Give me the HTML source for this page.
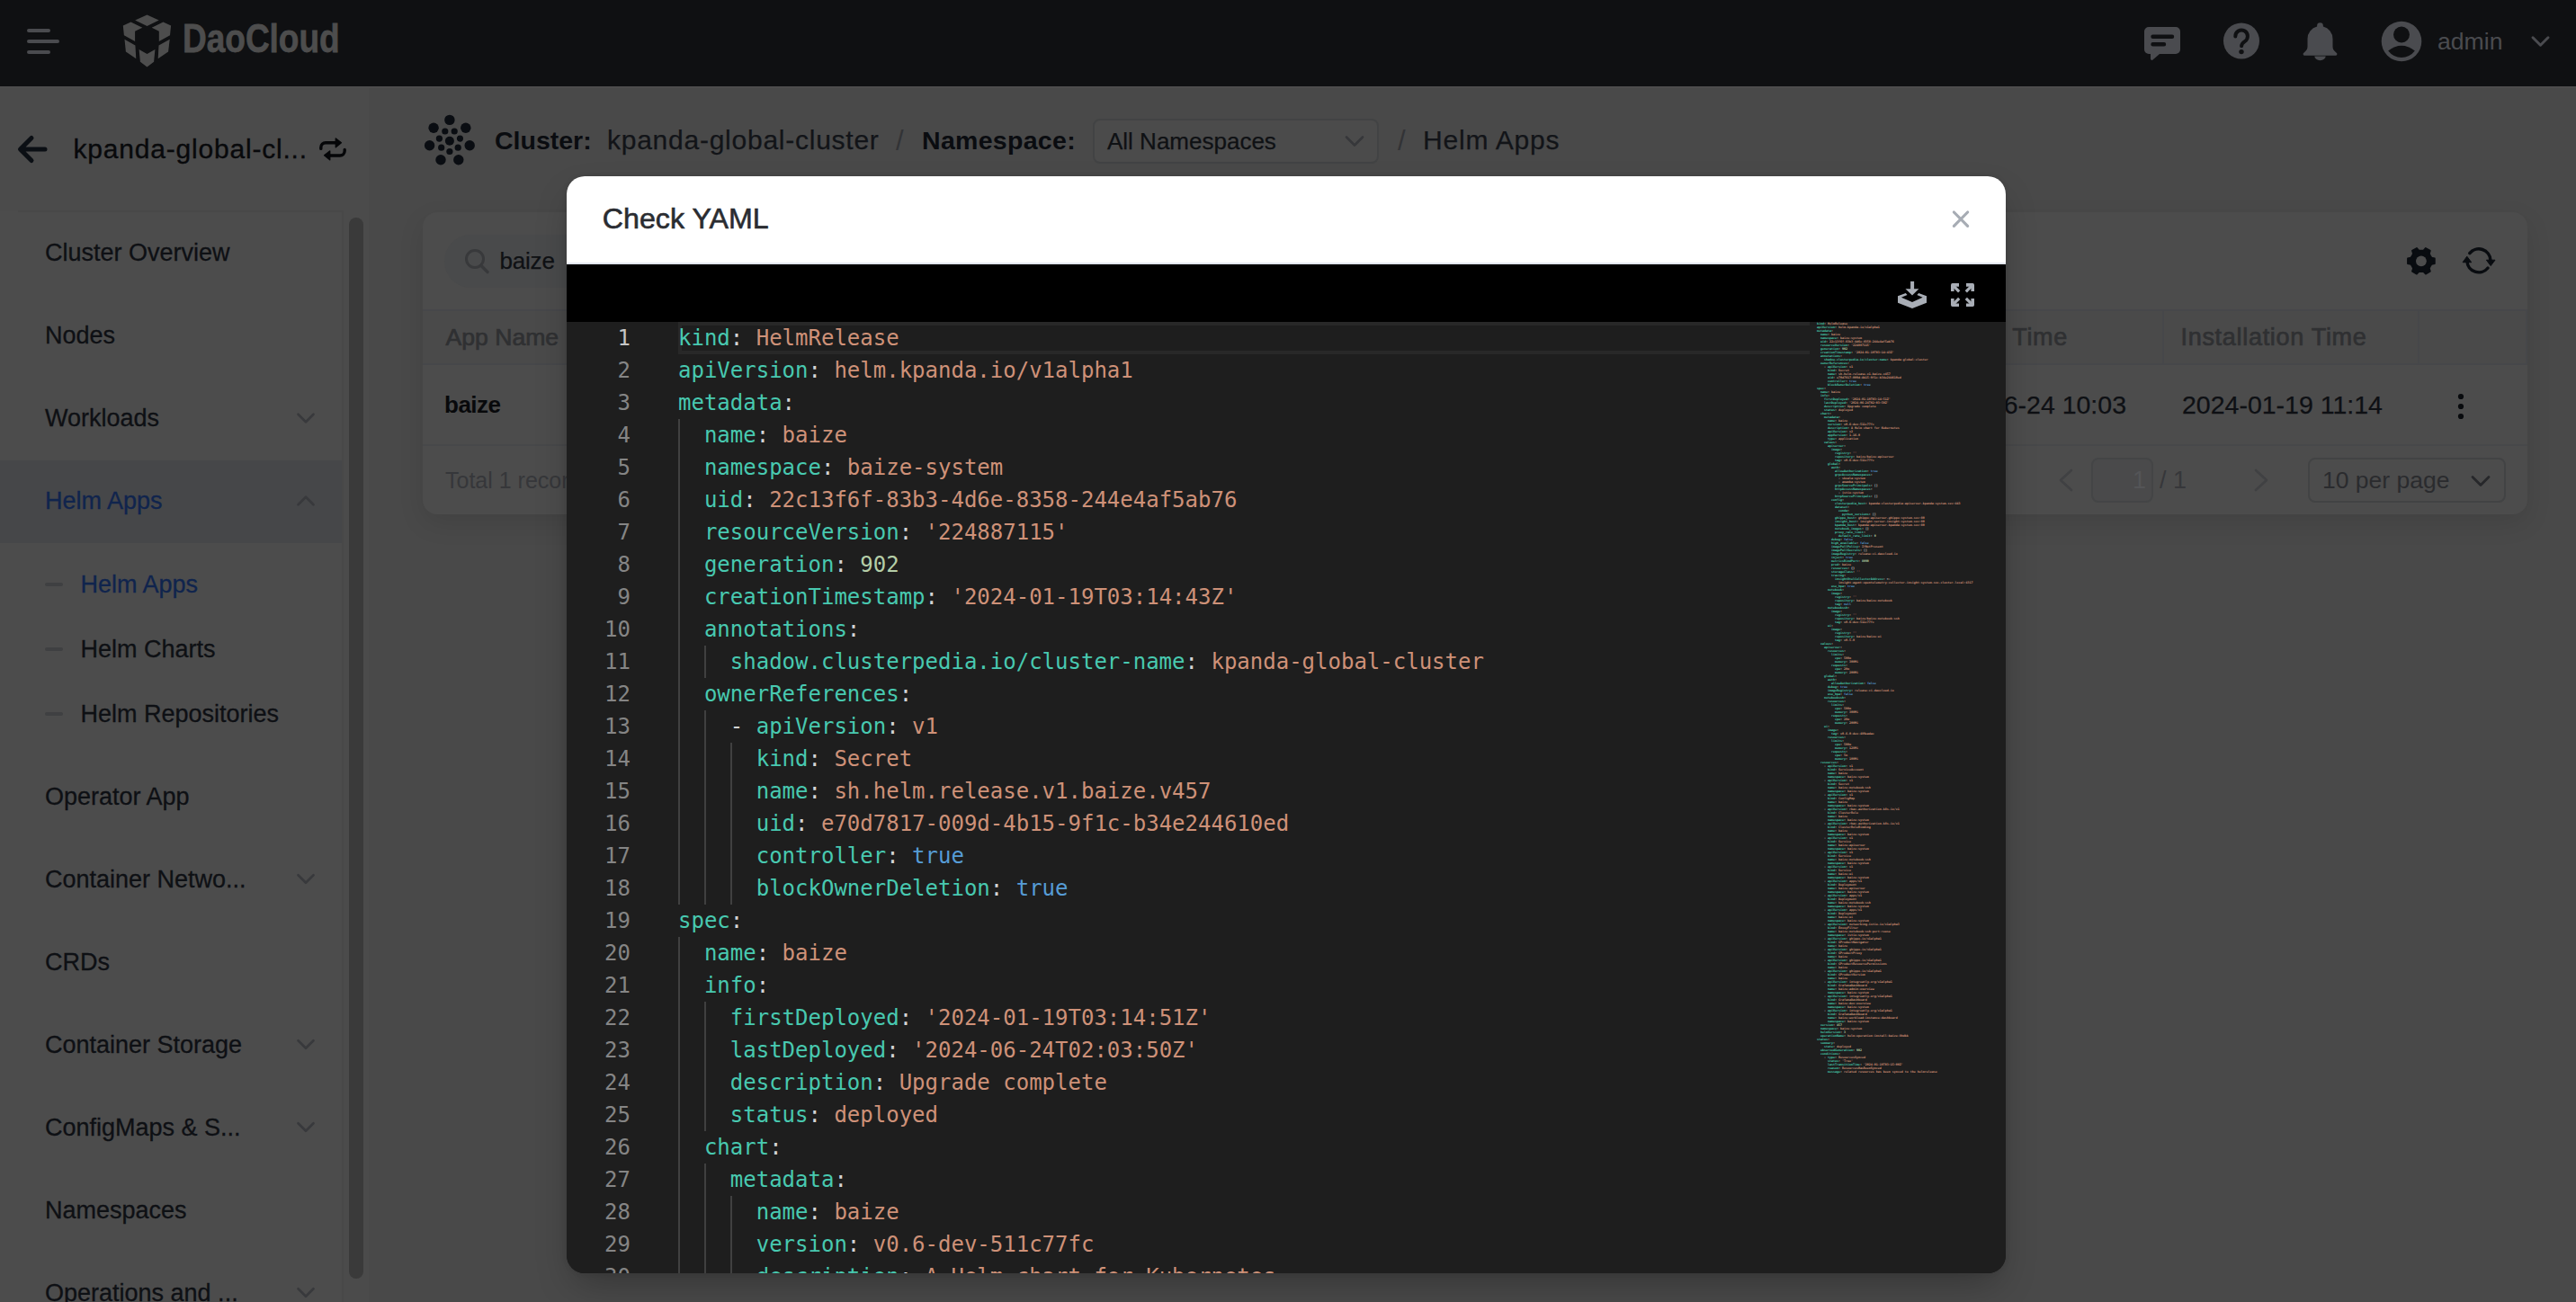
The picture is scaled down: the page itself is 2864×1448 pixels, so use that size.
<!DOCTYPE html>
<html lang="en">
<head>
<meta charset="utf-8">
<title>Helm Apps - Check YAML</title>
<style>
*{box-sizing:border-box;margin:0;padding:0}
html,body{width:2864px;height:1448px;overflow:hidden}
body{position:relative;background:#494949;font-family:"Liberation Sans",sans-serif;color:#0e1014}
.a{position:absolute}
.t{position:absolute;white-space:nowrap;line-height:1;transform:translateY(-50%)}
.b{font-weight:700}
svg{display:block;overflow:visible;position:absolute;left:0;top:0}
.hdr{left:0;top:0;width:2864px;height:96px;background:#0f1012}
.side{left:0;top:98px;width:410px;height:1350px;background:#4b4b4b}
.menu{left:0;top:235px;width:382px;height:1213px;background:#4c4c4c;border-right:2px solid #484848}
.card{left:470px;top:236px;width:2340px;height:336px;background:#4c4c4c;border-radius:16px;box-shadow:0 10px 28px rgba(0,0,0,.10)}
.bar{background:#4a4b4f;height:4px;border-radius:2px;left:30px}
.ln2{background:#474747}
.modal{left:630px;top:196px;width:1600px;height:1220px;border-radius:20px;background:#1e1e1e;overflow:hidden;box-shadow:none}
.mshadow{left:630px;top:196px;width:1600px;height:1220px;border-radius:20px;box-shadow:0 18px 40px -8px rgba(0,0,0,.28),0 0 6px rgba(0,0,0,.09)}
.mh{left:0;top:0;width:1600px;height:98px;background:#fff;border-bottom:2px solid #e3e6ee}
.tb{left:0;top:98px;width:1600px;height:64px;background:#000}
.ed{left:0;top:162px;width:1600px;height:1058px;background:#1e1e1e;overflow:hidden;font-family:"DejaVu Sans Mono","Liberation Mono",monospace;font-size:24px;line-height:36px;color:#d4d4d4}
.ln{position:absolute;left:0;width:71px;height:36px;text-align:right;color:#858585;white-space:pre}
.ln.act{color:#c6c6c6}
.code{position:absolute;left:124px;top:0;width:1260px;height:1100px}
.cl{position:absolute;left:0;height:36px;white-space:pre}
.g{position:absolute;display:block;width:2px;height:36px;background:#404040}
.cur{position:absolute;left:124px;top:0;width:1258px;height:36px;border:4px solid #282828;border-right:0}
.ty{color:#48c9b0}.st{color:#ce9178}.nu{color:#b5cea8}.kw{color:#569cd6}.op{color:#d4d4d4}
.mini{position:absolute;left:1390px;top:0;width:200px;font-size:3.32px;line-height:4px;opacity:1;font-weight:700}
.mini div{height:4px;white-space:pre;overflow:visible}

</style>
</head>
<body>
<header>
<div class="a hdr"></div>
<div class="a " style="left:0px;top:96px;width:2864px;height:2px;background:#4d4d4d"></div>
<div class="a bar" style="left:30px;top:32px;width:26px;height:4px;"></div>
<div class="a bar" style="left:30px;top:44px;width:36px;height:4px;"></div>
<div class="a bar" style="left:30px;top:56px;width:26px;height:4px;"></div>
<div class="t b" style="left:202.6px;top:42.2px;font-size:45px;color:#4d4d4d;transform-origin:0 50%;transform:translateY(-50%) scaleX(.822);-webkit-text-stroke:.8px #4d4d4d">DaoCloud</div>
<div class="t " style="left:2710px;top:46px;font-size:26.6px;color:#4a4b4f;">admin</div>
</header>
<aside><nav>
<div class="a side"></div>
<div class="a menu"></div>
<div class="a " style="left:20px;top:234px;width:362px;height:2px;background:#484848"></div>
<div class="a " style="left:0px;top:512px;width:380px;height:92px;background:#464749"></div>
<div class="a " style="left:388px;top:242px;width:16px;height:1180px;background:#3a3a3a;border-radius:8px"></div>
<div class="t " style="left:81.5px;top:166px;font-size:30px;color:#08090b;letter-spacing:.8px;-webkit-text-stroke:.35px #08090b">kpanda-global-cl...</div>
<div class="t " style="left:50px;top:281px;font-size:27px;color:#0e1014;-webkit-text-stroke:.3px #0e1014">Cluster Overview</div>
<div class="t " style="left:50px;top:373px;font-size:27px;color:#0e1014;-webkit-text-stroke:.3px #0e1014">Nodes</div>
<div class="t " style="left:50px;top:465px;font-size:27px;color:#0e1014;-webkit-text-stroke:.3px #0e1014">Workloads</div>
<div class="t " style="left:50px;top:557px;font-size:27px;color:#10244d;-webkit-text-stroke:.3px #10244d">Helm Apps</div>
<div class="t " style="left:50px;top:885.5px;font-size:27px;color:#0e1014;-webkit-text-stroke:.3px #0e1014">Operator App</div>
<div class="t " style="left:50px;top:977.5px;font-size:27px;color:#0e1014;-webkit-text-stroke:.3px #0e1014">Container Netwo...</div>
<div class="t " style="left:50px;top:1069.5px;font-size:27px;color:#0e1014;-webkit-text-stroke:.3px #0e1014">CRDs</div>
<div class="t " style="left:50px;top:1161.5px;font-size:27px;color:#0e1014;-webkit-text-stroke:.3px #0e1014">Container Storage</div>
<div class="t " style="left:50px;top:1253.5px;font-size:27px;color:#0e1014;-webkit-text-stroke:.3px #0e1014">ConfigMaps &amp; S...</div>
<div class="t " style="left:50px;top:1345.5px;font-size:27px;color:#0e1014;-webkit-text-stroke:.3px #0e1014">Namespaces</div>
<div class="t " style="left:50px;top:1437.5px;font-size:27px;color:#0e1014;-webkit-text-stroke:.3px #0e1014">Operations and ...</div>
<div class="a " style="left:50px;top:648px;width:20px;height:4px;background:#3f4042;border-radius:2px"></div>
<div class="t " style="left:89.5px;top:650px;font-size:27px;color:#10244d;-webkit-text-stroke:.3px #10244d">Helm Apps</div>
<div class="a " style="left:50px;top:720px;width:20px;height:4px;background:#3f4042;border-radius:2px"></div>
<div class="t " style="left:89.5px;top:722px;font-size:27px;color:#0e1014;-webkit-text-stroke:.3px #0e1014">Helm Charts</div>
<div class="a " style="left:50px;top:792px;width:20px;height:4px;background:#3f4042;border-radius:2px"></div>
<div class="t " style="left:89.5px;top:794px;font-size:27px;color:#0e1014;-webkit-text-stroke:.3px #0e1014">Helm Repositories</div>
</nav></aside>
<main>
<div class="t b" style="left:550px;top:156px;font-size:28.5px;color:#0a0c10;">Cluster:</div>
<div class="t " style="left:675px;top:156px;font-size:30px;color:#121418;letter-spacing:.75px;-webkit-text-stroke:.25px #121418">kpanda-global-cluster</div>
<div class="t " style="left:996px;top:156px;font-size:31px;color:#323336;">/</div>
<div class="t b" style="left:1025px;top:156px;font-size:28.5px;color:#0a0c10;letter-spacing:.3px">Namespace:</div>
<div class="a " style="left:1215px;top:132px;width:318px;height:50px;border:2px solid #424344;border-radius:8px;background:#4b4b4b"></div>
<div class="t " style="left:1231px;top:157px;font-size:26px;color:#0f1114;-webkit-text-stroke:.25px #0f1114">All Namespaces</div>
<div class="t " style="left:1554px;top:156px;font-size:31px;color:#323336;">/</div>
<div class="t " style="left:1582px;top:156px;font-size:30px;color:#121418;letter-spacing:.8px;-webkit-text-stroke:.25px #121418">Helm Apps</div>
<div class="a card"></div>
<div class="a " style="left:494px;top:261px;width:1200px;height:59px;background:#494a4b;border-radius:30px"></div>
<div class="t " style="left:555.5px;top:290px;font-size:26px;color:#0f1114;letter-spacing:-.2px;-webkit-text-stroke:.25px #0f1114">baize</div>
<div class="a " style="left:470px;top:344px;width:2340px;height:62px;background:#4a4a4a;border:2px solid #46474a;border-left:0"></div>
<div class="a " style="left:2404px;top:346px;width:2px;height:58px;background:#46474a"></div>
<div class="a " style="left:2688px;top:346px;width:2px;height:58px;background:#46474a"></div>
<div class="t " style="left:495.5px;top:375px;font-size:26.6px;color:#2f3032;-webkit-text-stroke:.7px #2f3032">App Name</div>
<div class="t " style="right:565px;top:375px;font-size:27px;color:#2f3032;letter-spacing:.7px;word-spacing:8px;-webkit-text-stroke:.7px #2f3032">Update Time</div>
<div class="t " style="left:2424.5px;top:375px;font-size:27px;color:#2f3032;letter-spacing:.7px;-webkit-text-stroke:.7px #2f3032">Installation Time</div>
<div class="a " style="left:470px;top:493.5px;width:2340px;height:2px;background:#47484a"></div>
<div class="t b" style="left:494px;top:450px;font-size:26px;color:#08090b;letter-spacing:-.5px">baize</div>
<div class="t " style="right:500px;top:449.5px;font-size:28.5px;color:#0e1014;-webkit-text-stroke:.25px #0e1014">2024-06-24 10:03</div>
<div class="t " style="left:2426px;top:449.5px;font-size:28.5px;color:#0e1014;-webkit-text-stroke:.25px #0e1014">2024-01-19 11:14</div>
<div class="t " style="left:495px;top:534px;font-size:25px;color:#36373a;">Total 1 records</div>
<div class="a " style="left:2325px;top:509px;width:69px;height:50px;border:2px solid #444546;border-radius:8px;background:#4a4a4b"></div>
<div class="t " style="right:478px;top:534px;font-size:27px;color:#545557;">1</div>
<div class="t " style="left:2401px;top:534px;font-size:27px;color:#36373a;">/ 1</div>
<div class="a " style="left:2566px;top:509px;width:220px;height:50px;border:2px solid #424344;border-radius:8px"></div>
<div class="t " style="left:2582px;top:534px;font-size:26.5px;color:#2a2b2e;">10 per page</div>
<svg width="2864" height="1448" viewBox="0 0 2864 1448"><polygon points="163.5,16.5 176.7,22.5 163.5,29 150.2,22.5" fill="#4d4d4d"/><polygon points="136.8,28.5 145.5,24.6 158.3,30.8 150.1,34.8 150.1,46 137.9,39.3" fill="#4d4d4d"/><polygon points="190.1,28.5 181.4,24.6 168.7,30.8 176.8,34.8 176.8,46 189,39.3" fill="#4d4d4d"/><polygon points="138.5,43.7 150.4,50.5 151.3,65.2 139.9,57.6" fill="#4d4d4d"/><polygon points="188.7,43.7 176.5,50.5 175.7,65.2 187.1,57.6" fill="#4d4d4d"/><polygon points="154.6,54.9 163.5,60 172.4,54.9 171.1,68.7 163.5,74.5 155.9,68.7" fill="#4d4d4d"/><path d="M2389 30 h30 a5 5 0 0 1 5 5 v20 a5 5 0 0 1 -5 5 h-18 l-7.5 6.5 a1.5 1.5 0 0 1 -2.5 -1.2 v-5.3 h-2 a5 5 0 0 1 -5 -5 v-20 a5 5 0 0 1 5 -5 z" fill="#4a4b4f"/><path d="M2393.5 40.8 h21.5 M2393.5 49.3 h12.5" stroke="#0f1012" stroke-width="4.4" stroke-linecap="round"/><circle cx="2492" cy="45.5" r="20" fill="#4a4b4f"/><path d="M2485.3 40.5 a6.8 6.8 0 1 1 10.4 5.6 c-2.6 1.7 -3.6 2.8 -3.6 5.2" fill="none" stroke="#0f1012" stroke-width="4" stroke-linecap="round"/><circle cx="2492" cy="57.6" r="2.7" fill="#0f1012"/><path d="M2579.5 25.300 a3.4 3.4 0 0 1 3.4 3.4 v.9 a14 14 0 0 1 10.6 13.6 v8.500 c0 2.500 1 4 2.800 5.800 l1.600 1.600 a1.500 1.500 0 0 1 -1.100 2.600 h-34.6 a1.500 1.500 0 0 1 -1.100 -2.600 l1.600 -1.600 c1.800 -1.800 2.800 -3.300 2.800 -5.800 v-8.500 a14 14 0 0 1 10.6 -13.6 v-.9 a3.4 3.4 0 0 1 3.4 -3.4 z" fill="#4a4b4f"/><path d="M2573.3 62.6 h12.4 a6.2 4.6 0 0 1 -12.4 0 z" fill="#4a4b4f"/><circle cx="2670" cy="46" r="22.3" fill="#4a4b4f"/><circle cx="2670" cy="38.5" r="9" fill="#0f1012"/><path d="M2655.2 56.5 Q2670 45 2684.800 56.5 A18.4 18.4 0 0 1 2655.2 56.5 Z" fill="#0f1012"/><polyline points="2816.0,41.75 2824.5,50.25 2833.0,41.75" fill="none" stroke="#4a4b4f" stroke-width="3" stroke-linecap="round" stroke-linejoin="round"/><path d="M50 166 H23 M35 153.5 L22.500 166 L35 178.500" fill="none" stroke="#0b0f14" stroke-width="5" stroke-linecap="round" stroke-linejoin="round"/><path d="M356.800 165.4 v-1.400 a5.2 5.2 0 0 1 5.2 -5.2 h11 M383.200 166.4 v1.400 a5.2 5.2 0 0 1 -5.2 5.2 h-11" fill="none" stroke="#050608" stroke-width="3.4" stroke-linecap="round"/><polygon points="373.300,154 379.400,158.800 373.300,163.700" fill="#050608" stroke="#050608" stroke-width="1.400" stroke-linejoin="round"/><polygon points="366.700,168 360.600,172.800 366.700,177.700" fill="#050608" stroke="#050608" stroke-width="1.400" stroke-linejoin="round"/><polyline points="331.5,460.75 340,469.25 348.5,460.75" fill="none" stroke="#38393c" stroke-width="2.6" stroke-linecap="round" stroke-linejoin="round"/><polyline points="331.5,561.25 340,552.75 348.5,561.25" fill="none" stroke="#38393c" stroke-width="2.6" stroke-linecap="round" stroke-linejoin="round"/><polyline points="331.5,973.25 340,981.75 348.5,973.25" fill="none" stroke="#38393c" stroke-width="2.6" stroke-linecap="round" stroke-linejoin="round"/><polyline points="331.5,1157.25 340,1165.75 348.5,1157.25" fill="none" stroke="#38393c" stroke-width="2.6" stroke-linecap="round" stroke-linejoin="round"/><polyline points="331.5,1249.25 340,1257.75 348.5,1249.25" fill="none" stroke="#38393c" stroke-width="2.6" stroke-linecap="round" stroke-linejoin="round"/><polyline points="331.5,1433.25 340,1441.75 348.5,1433.25" fill="none" stroke="#38393c" stroke-width="2.6" stroke-linecap="round" stroke-linejoin="round"/><circle cx="499.9" cy="133.4" r="5.7" fill="#0a0d12"/><circle cx="482.1" cy="142.3" r="5.7" fill="#0a0d12"/><circle cx="517.8" cy="142.3" r="5.7" fill="#0a0d12"/><circle cx="477.6" cy="161.8" r="5.7" fill="#0a0d12"/><circle cx="522.2" cy="161.8" r="5.7" fill="#0a0d12"/><circle cx="490" cy="177.8" r="5.7" fill="#0a0d12"/><circle cx="509.8" cy="177.8" r="5.7" fill="#0a0d12"/><circle cx="494.8" cy="146" r="3.6" fill="#0a0d12"/><circle cx="505.2" cy="146" r="3.6" fill="#0a0d12"/><circle cx="488.4" cy="154.1" r="3.6" fill="#0a0d12"/><circle cx="511.4" cy="154.1" r="3.6" fill="#0a0d12"/><circle cx="490.7" cy="164.2" r="3.6" fill="#0a0d12"/><circle cx="509.2" cy="164.2" r="3.6" fill="#0a0d12"/><circle cx="499.9" cy="168.5" r="3.6" fill="#0a0d12"/><circle cx="499.9" cy="156.7" r="5" fill="#0a0d12"/><polyline points="1497.0,152.5 1506,161.5 1515.0,152.5" fill="none" stroke="#36373a" stroke-width="2.6" stroke-linecap="round" stroke-linejoin="round"/><circle cx="528" cy="288" r="9.5" fill="none" stroke="#38393b" stroke-width="3"/><path d="M535 295.500 L542 302.500" stroke="#38393b" stroke-width="3.4" stroke-linecap="round"/><polygon points="2706.92,287.38 2706.92,293.22 2703.41,294.04 2702.03,296.15 2700.89,298.40 2701.94,301.85 2696.88,304.77 2694.42,302.14 2691.90,302.00 2689.38,302.14 2686.92,304.77 2681.86,301.85 2682.91,298.40 2681.77,296.15 2680.39,294.04 2676.88,293.22 2676.88,287.38 2680.39,286.56 2681.77,284.45 2682.91,282.20 2681.86,278.75 2686.92,275.83 2689.38,278.46 2691.90,278.60 2694.42,278.46 2696.88,275.83 2701.94,278.75 2700.89,282.20 2702.03,284.45 2703.41,286.56" fill="#090c10" stroke="#090c10" stroke-width="1.600" stroke-linejoin="round"/><circle cx="2691.9" cy="290.3" r="5.9" fill="#4c4c4c"/><path d="M2745.800 281.700 A13 13 0 0 1 2768.900 289.300" fill="none" stroke="#090c10" stroke-width="3.500" stroke-linecap="round"/><path d="M2766 298 A13 13 0 0 1 2742.900 290.300" fill="none" stroke="#090c10" stroke-width="3.500" stroke-linecap="round"/><polygon points="2764.400,289.200 2774,289.200 2769.200,295.600" fill="#090c10" stroke="#090c10" stroke-width="1" stroke-linejoin="round"/><polygon points="2738.100,291.700 2747.700,291.700 2742.800,285.200" fill="#090c10" stroke="#090c10" stroke-width="1" stroke-linejoin="round"/><circle cx="2736" cy="441" r="3.1" fill="#090b0e"/><circle cx="2736" cy="452" r="3.1" fill="#090b0e"/><circle cx="2736" cy="463" r="3.1" fill="#090b0e"/><polyline points="2303,523 2291,534 2303,545" fill="none" stroke="#404143" stroke-width="2.6" stroke-linecap="round" stroke-linejoin="round"/><polyline points="2508,523 2520,534 2508,545" fill="none" stroke="#404143" stroke-width="2.6" stroke-linecap="round" stroke-linejoin="round"/><polyline points="2749.0,530.5 2758,539.5 2767.0,530.5" fill="none" stroke="#26272a" stroke-width="2.8" stroke-linecap="round" stroke-linejoin="round"/></svg>
</main>
<div class="a mshadow"></div>
<div class="a modal" role="dialog" aria-modal="true" aria-label="Check YAML">
<div class="a mh"></div>
<div class="t" style="left:39.8px;top:47px;font-size:32.2px;color:#2a2c31;-webkit-text-stroke:.6px #2a2c31">Check YAML</div>
<div class="a tb"></div>
<svg width="1600" height="1220" viewBox="0 0 1600 1220"><path d="M1542.400 40 L1557.600 55.400 M1557.600 40 L1542.400 55.400" stroke="#a7acb4" stroke-width="3.2" stroke-linecap="round"/><rect x="1494.100" y="116.900" width="4" height="9" fill="#a9aeb6"/><polygon points="1488.500,125.200 1503.400,125.200 1496,132.600" fill="#a9aeb6"/><polygon points="1480,133.300 1488.800,129.900 1490.500,131.900 1483.900,134.700 1496,139.900 1507.600,134.700 1501.300,131.900 1503.200,129.900 1512,133.300 1512,140.800 1496,147.100 1480,140.800" fill="#a9aeb6"/><path d="M1548.0 120.9 H1540.8 V128.1" fill="none" stroke="#a9aeb6" stroke-width="3.6" stroke-linejoin="round"/><path d="M1540.8 120.9 L1548.2 128.3" stroke="#a9aeb6" stroke-width="3.2"/><path d="M1556.0 120.9 H1563.2 V128.1" fill="none" stroke="#a9aeb6" stroke-width="3.6" stroke-linejoin="round"/><path d="M1563.2 120.9 L1555.8 128.3" stroke="#a9aeb6" stroke-width="3.2"/><path d="M1548.0 143.2 H1540.8 V136.0" fill="none" stroke="#a9aeb6" stroke-width="3.6" stroke-linejoin="round"/><path d="M1540.8 143.2 L1548.2 135.79999999999998" stroke="#a9aeb6" stroke-width="3.2"/><path d="M1556.0 143.2 H1563.2 V136.0" fill="none" stroke="#a9aeb6" stroke-width="3.6" stroke-linejoin="round"/><path d="M1563.2 143.2 L1555.8 135.79999999999998" stroke="#a9aeb6" stroke-width="3.2"/></svg>
<div class="a ed">
<div class="cur"></div>
<div class="ln act" style="top:0px">1</div>
<div class="ln" style="top:36px">2</div>
<div class="ln" style="top:72px">3</div>
<div class="ln" style="top:108px">4</div>
<div class="ln" style="top:144px">5</div>
<div class="ln" style="top:180px">6</div>
<div class="ln" style="top:216px">7</div>
<div class="ln" style="top:252px">8</div>
<div class="ln" style="top:288px">9</div>
<div class="ln" style="top:324px">10</div>
<div class="ln" style="top:360px">11</div>
<div class="ln" style="top:396px">12</div>
<div class="ln" style="top:432px">13</div>
<div class="ln" style="top:468px">14</div>
<div class="ln" style="top:504px">15</div>
<div class="ln" style="top:540px">16</div>
<div class="ln" style="top:576px">17</div>
<div class="ln" style="top:612px">18</div>
<div class="ln" style="top:648px">19</div>
<div class="ln" style="top:684px">20</div>
<div class="ln" style="top:720px">21</div>
<div class="ln" style="top:756px">22</div>
<div class="ln" style="top:792px">23</div>
<div class="ln" style="top:828px">24</div>
<div class="ln" style="top:864px">25</div>
<div class="ln" style="top:900px">26</div>
<div class="ln" style="top:936px">27</div>
<div class="ln" style="top:972px">28</div>
<div class="ln" style="top:1008px">29</div>
<div class="ln" style="top:1044px">30</div>
<div class="code"><i class="g" style="left:0px;top:108px"></i><i class="g" style="left:0px;top:144px"></i><i class="g" style="left:0px;top:180px"></i><i class="g" style="left:0px;top:216px"></i><i class="g" style="left:0px;top:252px"></i><i class="g" style="left:0px;top:288px"></i><i class="g" style="left:0px;top:324px"></i><i class="g" style="left:0px;top:360px"></i><i class="g" style="left:29px;top:360px"></i><i class="g" style="left:0px;top:396px"></i><i class="g" style="left:0px;top:432px"></i><i class="g" style="left:29px;top:432px"></i><i class="g" style="left:0px;top:468px"></i><i class="g" style="left:29px;top:468px"></i><i class="g" style="left:58px;top:468px"></i><i class="g" style="left:0px;top:504px"></i><i class="g" style="left:29px;top:504px"></i><i class="g" style="left:58px;top:504px"></i><i class="g" style="left:0px;top:540px"></i><i class="g" style="left:29px;top:540px"></i><i class="g" style="left:58px;top:540px"></i><i class="g" style="left:0px;top:576px"></i><i class="g" style="left:29px;top:576px"></i><i class="g" style="left:58px;top:576px"></i><i class="g" style="left:0px;top:612px"></i><i class="g" style="left:29px;top:612px"></i><i class="g" style="left:58px;top:612px"></i><i class="g" style="left:0px;top:684px"></i><i class="g" style="left:0px;top:720px"></i><i class="g" style="left:0px;top:756px"></i><i class="g" style="left:29px;top:756px"></i><i class="g" style="left:0px;top:792px"></i><i class="g" style="left:29px;top:792px"></i><i class="g" style="left:0px;top:828px"></i><i class="g" style="left:29px;top:828px"></i><i class="g" style="left:0px;top:864px"></i><i class="g" style="left:29px;top:864px"></i><i class="g" style="left:0px;top:900px"></i><i class="g" style="left:0px;top:936px"></i><i class="g" style="left:29px;top:936px"></i><i class="g" style="left:0px;top:972px"></i><i class="g" style="left:29px;top:972px"></i><i class="g" style="left:58px;top:972px"></i><i class="g" style="left:0px;top:1008px"></i><i class="g" style="left:29px;top:1008px"></i><i class="g" style="left:58px;top:1008px"></i><i class="g" style="left:0px;top:1044px"></i><i class="g" style="left:29px;top:1044px"></i><i class="g" style="left:58px;top:1044px"></i>
<div class="cl" style="top:0px"><span class="ty">kind</span><span class="op">:</span> <span class="st">HelmRelease</span></div>
<div class="cl" style="top:36px"><span class="ty">apiVersion</span><span class="op">:</span> <span class="st">helm.kpanda.io/v1alpha1</span></div>
<div class="cl" style="top:72px"><span class="ty">metadata</span><span class="op">:</span></div>
<div class="cl" style="top:108px">  <span class="ty">name</span><span class="op">:</span> <span class="st">baize</span></div>
<div class="cl" style="top:144px">  <span class="ty">namespace</span><span class="op">:</span> <span class="st">baize-system</span></div>
<div class="cl" style="top:180px">  <span class="ty">uid</span><span class="op">:</span> <span class="st">22c13f6f-83b3-4d6e-8358-244e4af5ab76</span></div>
<div class="cl" style="top:216px">  <span class="ty">resourceVersion</span><span class="op">:</span> <span class="st">'224887115'</span></div>
<div class="cl" style="top:252px">  <span class="ty">generation</span><span class="op">:</span> <span class="nu">902</span></div>
<div class="cl" style="top:288px">  <span class="ty">creationTimestamp</span><span class="op">:</span> <span class="st">'2024-01-19T03:14:43Z'</span></div>
<div class="cl" style="top:324px">  <span class="ty">annotations</span><span class="op">:</span></div>
<div class="cl" style="top:360px">    <span class="ty">shadow.clusterpedia.io/cluster-name</span><span class="op">:</span> <span class="st">kpanda-global-cluster</span></div>
<div class="cl" style="top:396px">  <span class="ty">ownerReferences</span><span class="op">:</span></div>
<div class="cl" style="top:432px">    <span class="op">-</span> <span class="ty">apiVersion</span><span class="op">:</span> <span class="st">v1</span></div>
<div class="cl" style="top:468px">      <span class="ty">kind</span><span class="op">:</span> <span class="st">Secret</span></div>
<div class="cl" style="top:504px">      <span class="ty">name</span><span class="op">:</span> <span class="st">sh.helm.release.v1.baize.v457</span></div>
<div class="cl" style="top:540px">      <span class="ty">uid</span><span class="op">:</span> <span class="st">e70d7817-009d-4b15-9f1c-b34e244610ed</span></div>
<div class="cl" style="top:576px">      <span class="ty">controller</span><span class="op">:</span> <span class="kw">true</span></div>
<div class="cl" style="top:612px">      <span class="ty">blockOwnerDeletion</span><span class="op">:</span> <span class="kw">true</span></div>
<div class="cl" style="top:648px"><span class="ty">spec</span><span class="op">:</span></div>
<div class="cl" style="top:684px">  <span class="ty">name</span><span class="op">:</span> <span class="st">baize</span></div>
<div class="cl" style="top:720px">  <span class="ty">info</span><span class="op">:</span></div>
<div class="cl" style="top:756px">    <span class="ty">firstDeployed</span><span class="op">:</span> <span class="st">'2024-01-19T03:14:51Z'</span></div>
<div class="cl" style="top:792px">    <span class="ty">lastDeployed</span><span class="op">:</span> <span class="st">'2024-06-24T02:03:50Z'</span></div>
<div class="cl" style="top:828px">    <span class="ty">description</span><span class="op">:</span> <span class="st">Upgrade complete</span></div>
<div class="cl" style="top:864px">    <span class="ty">status</span><span class="op">:</span> <span class="st">deployed</span></div>
<div class="cl" style="top:900px">  <span class="ty">chart</span><span class="op">:</span></div>
<div class="cl" style="top:936px">    <span class="ty">metadata</span><span class="op">:</span></div>
<div class="cl" style="top:972px">      <span class="ty">name</span><span class="op">:</span> <span class="st">baize</span></div>
<div class="cl" style="top:1008px">      <span class="ty">version</span><span class="op">:</span> <span class="st">v0.6-dev-511c77fc</span></div>
<div class="cl" style="top:1044px">      <span class="ty">description</span><span class="op">:</span> <span class="st">A Helm chart for Kubernetes</span></div></div>
<div class="mini">
<div><span class="ty">kind</span><span class="op">:</span> <span class="st">HelmRelease</span></div>
<div><span class="ty">apiVersion</span><span class="op">:</span> <span class="st">helm.kpanda.io/v1alpha1</span></div>
<div><span class="ty">metadata</span><span class="op">:</span></div>
<div>  <span class="ty">name</span><span class="op">:</span> <span class="st">baize</span></div>
<div>  <span class="ty">namespace</span><span class="op">:</span> <span class="st">baize-system</span></div>
<div>  <span class="ty">uid</span><span class="op">:</span> <span class="st">22c13f6f-83b3-4d6e-8358-244e4af5ab76</span></div>
<div>  <span class="ty">resourceVersion</span><span class="op">:</span> <span class="st">'224887115'</span></div>
<div>  <span class="ty">generation</span><span class="op">:</span> <span class="nu">902</span></div>
<div>  <span class="ty">creationTimestamp</span><span class="op">:</span> <span class="st">'2024-01-19T03:14:43Z'</span></div>
<div>  <span class="ty">annotations</span><span class="op">:</span></div>
<div>    <span class="ty">shadow.clusterpedia.io/cluster-name</span><span class="op">:</span> <span class="st">kpanda-global-cluster</span></div>
<div>  <span class="ty">ownerReferences</span><span class="op">:</span></div>
<div>    <span class="op">-</span> <span class="ty">apiVersion</span><span class="op">:</span> <span class="st">v1</span></div>
<div>      <span class="ty">kind</span><span class="op">:</span> <span class="st">Secret</span></div>
<div>      <span class="ty">name</span><span class="op">:</span> <span class="st">sh.helm.release.v1.baize.v457</span></div>
<div>      <span class="ty">uid</span><span class="op">:</span> <span class="st">e70d7817-009d-4b15-9f1c-b34e244610ed</span></div>
<div>      <span class="ty">controller</span><span class="op">:</span> <span class="kw">true</span></div>
<div>      <span class="ty">blockOwnerDeletion</span><span class="op">:</span> <span class="kw">true</span></div>
<div><span class="ty">spec</span><span class="op">:</span></div>
<div>  <span class="ty">name</span><span class="op">:</span> <span class="st">baize</span></div>
<div>  <span class="ty">info</span><span class="op">:</span></div>
<div>    <span class="ty">firstDeployed</span><span class="op">:</span> <span class="st">'2024-01-19T03:14:51Z'</span></div>
<div>    <span class="ty">lastDeployed</span><span class="op">:</span> <span class="st">'2024-06-24T02:03:50Z'</span></div>
<div>    <span class="ty">description</span><span class="op">:</span> <span class="st">Upgrade complete</span></div>
<div>    <span class="ty">status</span><span class="op">:</span> <span class="st">deployed</span></div>
<div>  <span class="ty">chart</span><span class="op">:</span></div>
<div>    <span class="ty">metadata</span><span class="op">:</span></div>
<div>      <span class="ty">name</span><span class="op">:</span> <span class="st">baize</span></div>
<div>      <span class="ty">version</span><span class="op">:</span> <span class="st">v0.6-dev-511c77fc</span></div>
<div>      <span class="ty">description</span><span class="op">:</span> <span class="st">A Helm chart for Kubernetes</span></div>
<div>      <span class="ty">apiVersion</span><span class="op">:</span> <span class="st">v2</span></div>
<div>      <span class="ty">appVersion</span><span class="op">:</span> <span class="st">1.16.0</span></div>
<div>      <span class="ty">type</span><span class="op">:</span> <span class="st">application</span></div>
<div>    <span class="ty">values</span><span class="op">:</span></div>
<div>      <span class="ty">apiserver</span><span class="op">:</span></div>
<div>        <span class="ty">image</span><span class="op">:</span></div>
<div>          <span class="ty">registry</span><span class="op">:</span> <span class="st">''</span></div>
<div>          <span class="ty">repository</span><span class="op">:</span> <span class="st">baize/baize-apiserver</span></div>
<div>          <span class="ty">tag</span><span class="op">:</span> <span class="st">v0.6-dev-511c77fc</span></div>
<div>      <span class="ty">global</span><span class="op">:</span></div>
<div>        <span class="ty">auth</span><span class="op">:</span></div>
<div>          <span class="ty">allowAuthorization</span><span class="op">:</span> <span class="kw">true</span></div>
<div>          <span class="ty">grpcAccessNamespaces</span><span class="op">:</span></div>
<div>            <span class="op">-</span> <span class="st">skoala-system</span></div>
<div>            <span class="op">-</span> <span class="st">amamba-system</span></div>
<div>          <span class="ty">grpcSourcePrincipals</span><span class="op">:</span> <span class="op">[]</span></div>
<div>          <span class="ty">httpAccessNamespaces</span><span class="op">:</span></div>
<div>            <span class="op">-</span> <span class="st">istio-system</span></div>
<div>          <span class="ty">httpSourcePrincipals</span><span class="op">:</span> <span class="op">[]</span></div>
<div>        <span class="ty">config</span><span class="op">:</span></div>
<div>          <span class="ty">clusterpedia_host</span><span class="op">:</span> <span class="st">kpanda-clusterpedia-apiserver.kpanda-system.svc:443</span></div>
<div>          <span class="ty">dataset</span><span class="op">:</span></div>
<div>            <span class="ty">conda</span><span class="op">:</span></div>
<div>              <span class="ty">python_versions</span><span class="op">:</span> <span class="op">[]</span></div>
<div>          <span class="ty">ghippo_host</span><span class="op">:</span> <span class="st">ghippo-apiserver.ghippo-system.svc:80</span></div>
<div>          <span class="ty">insight_host</span><span class="op">:</span> <span class="st">insight-server.insight-system.svc:80</span></div>
<div>          <span class="ty">kpanda_host</span><span class="op">:</span> <span class="st">kpanda-apiserver.kpanda-system.svc:80</span></div>
<div>          <span class="ty">notebook_images</span><span class="op">:</span> <span class="op">[]</span></div>
<div>          <span class="ty">proxy_rate_limit</span><span class="op">:</span></div>
<div>            <span class="ty">default_rate_limit</span><span class="op">:</span> <span class="nu">0</span></div>
<div>        <span class="ty">debug</span><span class="op">:</span> <span class="kw">false</span></div>
<div>        <span class="ty">high_available</span><span class="op">:</span> <span class="kw">false</span></div>
<div>        <span class="ty">imagePullPolicy</span><span class="op">:</span> <span class="st">IfNotPresent</span></div>
<div>        <span class="ty">imagePullSecrets</span><span class="op">:</span> <span class="op">[]</span></div>
<div>        <span class="ty">imageRegistry</span><span class="op">:</span> <span class="st">release-ci.daocloud.io</span></div>
<div>        <span class="ty">inject</span><span class="op">:</span> <span class="kw">true</span></div>
<div>        <span class="ty">metricsBindPort</span><span class="op">:</span> <span class="nu">8090</span></div>
<div>        <span class="ty">prod</span><span class="op">:</span> <span class="st">baize</span></div>
<div>        <span class="ty">resources</span><span class="op">:</span> <span class="op">{}</span></div>
<div>        <span class="ty">storageClass</span><span class="op">:</span> <span class="st">''</span></div>
<div>        <span class="ty">tracing</span><span class="op">:</span></div>
<div>          <span class="ty">insightOtelCollectorAddress</span><span class="op">:</span> <span class="op">&gt;-</span></div>
<div>            <span class="st">insight-agent-opentelemetry-collector.insight-system.svc.cluster.local:4317</span></div>
<div>        <span class="ty">use_hpa</span><span class="op">:</span> <span class="kw">true</span></div>
<div>      <span class="ty">notebook</span><span class="op">:</span></div>
<div>        <span class="ty">image</span><span class="op">:</span></div>
<div>          <span class="ty">registry</span><span class="op">:</span> <span class="st">''</span></div>
<div>          <span class="ty">repository</span><span class="op">:</span> <span class="st">baize/baize-notebook</span></div>
<div>          <span class="ty">tag</span><span class="op">:</span> <span class="kw">null</span></div>
<div>      <span class="ty">notebookssh</span><span class="op">:</span></div>
<div>        <span class="ty">image</span><span class="op">:</span></div>
<div>          <span class="ty">registry</span><span class="op">:</span> <span class="st">''</span></div>
<div>          <span class="ty">repository</span><span class="op">:</span> <span class="st">baize/baize-notebook-ssh</span></div>
<div>          <span class="ty">tag</span><span class="op">:</span> <span class="st">v0.6-dev-511c77fc</span></div>
<div>      <span class="ty">ui</span><span class="op">:</span></div>
<div>        <span class="ty">image</span><span class="op">:</span></div>
<div>          <span class="ty">registry</span><span class="op">:</span> <span class="st">''</span></div>
<div>          <span class="ty">repository</span><span class="op">:</span> <span class="st">baize/baize-ui</span></div>
<div>          <span class="ty">tag</span><span class="op">:</span> <span class="st">v0.5.0</span></div>
<div>  <span class="ty">values</span><span class="op">:</span></div>
<div>    <span class="ty">apiserver</span><span class="op">:</span></div>
<div>      <span class="ty">resources</span><span class="op">:</span></div>
<div>        <span class="ty">limits</span><span class="op">:</span></div>
<div>          <span class="ty">cpu</span><span class="op">:</span> <span class="st">500m</span></div>
<div>          <span class="ty">memory</span><span class="op">:</span> <span class="st">300Mi</span></div>
<div>        <span class="ty">requests</span><span class="op">:</span></div>
<div>          <span class="ty">cpu</span><span class="op">:</span> <span class="st">20m</span></div>
<div>          <span class="ty">memory</span><span class="op">:</span> <span class="st">200Mi</span></div>
<div>    <span class="ty">global</span><span class="op">:</span></div>
<div>      <span class="ty">auth</span><span class="op">:</span></div>
<div>        <span class="ty">allowAuthorization</span><span class="op">:</span> <span class="kw">false</span></div>
<div>      <span class="ty">debug</span><span class="op">:</span> <span class="kw">true</span></div>
<div>      <span class="ty">imageRegistry</span><span class="op">:</span> <span class="st">release-ci.daocloud.io</span></div>
<div>      <span class="ty">use_hpa</span><span class="op">:</span> <span class="kw">false</span></div>
<div>    <span class="ty">notebookssh</span><span class="op">:</span></div>
<div>      <span class="ty">resources</span><span class="op">:</span></div>
<div>        <span class="ty">limits</span><span class="op">:</span></div>
<div>          <span class="ty">cpu</span><span class="op">:</span> <span class="st">500m</span></div>
<div>          <span class="ty">memory</span><span class="op">:</span> <span class="st">300Mi</span></div>
<div>        <span class="ty">requests</span><span class="op">:</span></div>
<div>          <span class="ty">cpu</span><span class="op">:</span> <span class="st">20m</span></div>
<div>          <span class="ty">memory</span><span class="op">:</span> <span class="st">200Mi</span></div>
<div>    <span class="ty">ui</span><span class="op">:</span></div>
<div>      <span class="ty">image</span><span class="op">:</span></div>
<div>        <span class="ty">tag</span><span class="op">:</span> <span class="st">v0.6.0-dev-489eadac</span></div>
<div>      <span class="ty">resources</span><span class="op">:</span></div>
<div>        <span class="ty">limits</span><span class="op">:</span></div>
<div>          <span class="ty">cpu</span><span class="op">:</span> <span class="st">500m</span></div>
<div>          <span class="ty">memory</span><span class="op">:</span> <span class="st">128Mi</span></div>
<div>        <span class="ty">requests</span><span class="op">:</span></div>
<div>          <span class="ty">cpu</span><span class="op">:</span> <span class="st">5m</span></div>
<div>          <span class="ty">memory</span><span class="op">:</span> <span class="st">100Mi</span></div>
<div>  <span class="ty">resources</span><span class="op">:</span></div>
<div>    <span class="op">-</span> <span class="ty">apiVersion</span><span class="op">:</span> <span class="st">v1</span></div>
<div>      <span class="ty">kind</span><span class="op">:</span> <span class="st">ServiceAccount</span></div>
<div>      <span class="ty">name</span><span class="op">:</span> <span class="st">baize</span></div>
<div>      <span class="ty">namespace</span><span class="op">:</span> <span class="st">baize-system</span></div>
<div>    <span class="op">-</span> <span class="ty">apiVersion</span><span class="op">:</span> <span class="st">v1</span></div>
<div>      <span class="ty">kind</span><span class="op">:</span> <span class="st">Secret</span></div>
<div>      <span class="ty">name</span><span class="op">:</span> <span class="st">baize-notebook-ssh</span></div>
<div>      <span class="ty">namespace</span><span class="op">:</span> <span class="st">baize-system</span></div>
<div>    <span class="op">-</span> <span class="ty">apiVersion</span><span class="op">:</span> <span class="st">v1</span></div>
<div>      <span class="ty">kind</span><span class="op">:</span> <span class="st">ConfigMap</span></div>
<div>      <span class="ty">name</span><span class="op">:</span> <span class="st">baize</span></div>
<div>      <span class="ty">namespace</span><span class="op">:</span> <span class="st">baize-system</span></div>
<div>    <span class="op">-</span> <span class="ty">apiVersion</span><span class="op">:</span> <span class="st">rbac.authorization.k8s.io/v1</span></div>
<div>      <span class="ty">kind</span><span class="op">:</span> <span class="st">ClusterRole</span></div>
<div>      <span class="ty">name</span><span class="op">:</span> <span class="st">baize</span></div>
<div>      <span class="ty">namespace</span><span class="op">:</span> <span class="st">baize-system</span></div>
<div>    <span class="op">-</span> <span class="ty">apiVersion</span><span class="op">:</span> <span class="st">rbac.authorization.k8s.io/v1</span></div>
<div>      <span class="ty">kind</span><span class="op">:</span> <span class="st">ClusterRoleBinding</span></div>
<div>      <span class="ty">name</span><span class="op">:</span> <span class="st">baize</span></div>
<div>      <span class="ty">namespace</span><span class="op">:</span> <span class="st">baize-system</span></div>
<div>    <span class="op">-</span> <span class="ty">apiVersion</span><span class="op">:</span> <span class="st">v1</span></div>
<div>      <span class="ty">kind</span><span class="op">:</span> <span class="st">Service</span></div>
<div>      <span class="ty">name</span><span class="op">:</span> <span class="st">baize-apiserver</span></div>
<div>      <span class="ty">namespace</span><span class="op">:</span> <span class="st">baize-system</span></div>
<div>    <span class="op">-</span> <span class="ty">apiVersion</span><span class="op">:</span> <span class="st">v1</span></div>
<div>      <span class="ty">kind</span><span class="op">:</span> <span class="st">Service</span></div>
<div>      <span class="ty">name</span><span class="op">:</span> <span class="st">baize-notebook-ssh</span></div>
<div>      <span class="ty">namespace</span><span class="op">:</span> <span class="st">baize-system</span></div>
<div>    <span class="op">-</span> <span class="ty">apiVersion</span><span class="op">:</span> <span class="st">v1</span></div>
<div>      <span class="ty">kind</span><span class="op">:</span> <span class="st">Service</span></div>
<div>      <span class="ty">name</span><span class="op">:</span> <span class="st">baize-ui</span></div>
<div>      <span class="ty">namespace</span><span class="op">:</span> <span class="st">baize-system</span></div>
<div>    <span class="op">-</span> <span class="ty">apiVersion</span><span class="op">:</span> <span class="st">apps/v1</span></div>
<div>      <span class="ty">kind</span><span class="op">:</span> <span class="st">Deployment</span></div>
<div>      <span class="ty">name</span><span class="op">:</span> <span class="st">baize-apiserver</span></div>
<div>      <span class="ty">namespace</span><span class="op">:</span> <span class="st">baize-system</span></div>
<div>    <span class="op">-</span> <span class="ty">apiVersion</span><span class="op">:</span> <span class="st">apps/v1</span></div>
<div>      <span class="ty">kind</span><span class="op">:</span> <span class="st">Deployment</span></div>
<div>      <span class="ty">name</span><span class="op">:</span> <span class="st">baize-notebook-ssh</span></div>
<div>      <span class="ty">namespace</span><span class="op">:</span> <span class="st">baize-system</span></div>
<div>    <span class="op">-</span> <span class="ty">apiVersion</span><span class="op">:</span> <span class="st">apps/v1</span></div>
<div>      <span class="ty">kind</span><span class="op">:</span> <span class="st">Deployment</span></div>
<div>      <span class="ty">name</span><span class="op">:</span> <span class="st">baize-ui</span></div>
<div>      <span class="ty">namespace</span><span class="op">:</span> <span class="st">baize-system</span></div>
<div>    <span class="op">-</span> <span class="ty">apiVersion</span><span class="op">:</span> <span class="st">networking.istio.io/v1alpha3</span></div>
<div>      <span class="ty">kind</span><span class="op">:</span> <span class="st">EnvoyFilter</span></div>
<div>      <span class="ty">name</span><span class="op">:</span> <span class="st">baize-notebook-ssh-port-reuse</span></div>
<div>      <span class="ty">namespace</span><span class="op">:</span> <span class="st">istio-system</span></div>
<div>    <span class="op">-</span> <span class="ty">apiVersion</span><span class="op">:</span> <span class="st">ghippo.io/v1alpha1</span></div>
<div>      <span class="ty">kind</span><span class="op">:</span> <span class="st">GProductNavigator</span></div>
<div>      <span class="ty">name</span><span class="op">:</span> <span class="st">baize</span></div>
<div>    <span class="op">-</span> <span class="ty">apiVersion</span><span class="op">:</span> <span class="st">ghippo.io/v1alpha1</span></div>
<div>      <span class="ty">kind</span><span class="op">:</span> <span class="st">GProductProxy</span></div>
<div>      <span class="ty">name</span><span class="op">:</span> <span class="st">baize</span></div>
<div>    <span class="op">-</span> <span class="ty">apiVersion</span><span class="op">:</span> <span class="st">ghippo.io/v1alpha1</span></div>
<div>      <span class="ty">kind</span><span class="op">:</span> <span class="st">GProductResourcePermissions</span></div>
<div>      <span class="ty">name</span><span class="op">:</span> <span class="st">baize</span></div>
<div>    <span class="op">-</span> <span class="ty">apiVersion</span><span class="op">:</span> <span class="st">ghippo.io/v1alpha1</span></div>
<div>      <span class="ty">kind</span><span class="op">:</span> <span class="st">GProductVersion</span></div>
<div>      <span class="ty">name</span><span class="op">:</span> <span class="st">baize</span></div>
<div>    <span class="op">-</span> <span class="ty">apiVersion</span><span class="op">:</span> <span class="st">integreatly.org/v1alpha1</span></div>
<div>      <span class="ty">kind</span><span class="op">:</span> <span class="st">GrafanaDashboard</span></div>
<div>      <span class="ty">name</span><span class="op">:</span> <span class="st">baize-admin-overview</span></div>
<div>      <span class="ty">namespace</span><span class="op">:</span> <span class="st">baize-system</span></div>
<div>    <span class="op">-</span> <span class="ty">apiVersion</span><span class="op">:</span> <span class="st">integreatly.org/v1alpha1</span></div>
<div>      <span class="ty">kind</span><span class="op">:</span> <span class="st">GrafanaDashboard</span></div>
<div>      <span class="ty">name</span><span class="op">:</span> <span class="st">baize-dev-overview</span></div>
<div>      <span class="ty">namespace</span><span class="op">:</span> <span class="st">baize-system</span></div>
<div>    <span class="op">-</span> <span class="ty">apiVersion</span><span class="op">:</span> <span class="st">integreatly.org/v1alpha1</span></div>
<div>      <span class="ty">kind</span><span class="op">:</span> <span class="st">GrafanaDashboard</span></div>
<div>      <span class="ty">name</span><span class="op">:</span> <span class="st">baize-workload-instance-dashboard</span></div>
<div>      <span class="ty">namespace</span><span class="op">:</span> <span class="st">baize-system</span></div>
<div>  <span class="ty">version</span><span class="op">:</span> <span class="nu">457</span></div>
<div>  <span class="ty">namespace</span><span class="op">:</span> <span class="st">baize-system</span></div>
<div>  <span class="ty">helmVersion</span><span class="op">:</span> <span class="nu">3</span></div>
<div>  <span class="ty">operationName</span><span class="op">:</span> <span class="st">helm-operation-install-baize-8hdkk</span></div>
<div><span class="ty">status</span><span class="op">:</span></div>
<div>  <span class="ty">summary</span><span class="op">:</span></div>
<div>    <span class="ty">state</span><span class="op">:</span> <span class="st">deployed</span></div>
<div>  <span class="ty">observedGeneration</span><span class="op">:</span> <span class="nu">902</span></div>
<div>  <span class="ty">conditions</span><span class="op">:</span></div>
<div>    <span class="op">-</span> <span class="ty">type</span><span class="op">:</span> <span class="st">ResourcesSynced</span></div>
<div>      <span class="ty">status</span><span class="op">:</span> <span class="st">'True'</span></div>
<div>      <span class="ty">lastTransitionTime</span><span class="op">:</span> <span class="st">'2024-01-19T03:15:00Z'</span></div>
<div>      <span class="ty">reason</span><span class="op">:</span> <span class="st">ResourcesHasBeenSynced</span></div>
<div>      <span class="ty">message</span><span class="op">:</span> <span class="st">related resources has been synced to the helmrelease</span></div>
</div>
</div>
</div>
</body>
</html>
